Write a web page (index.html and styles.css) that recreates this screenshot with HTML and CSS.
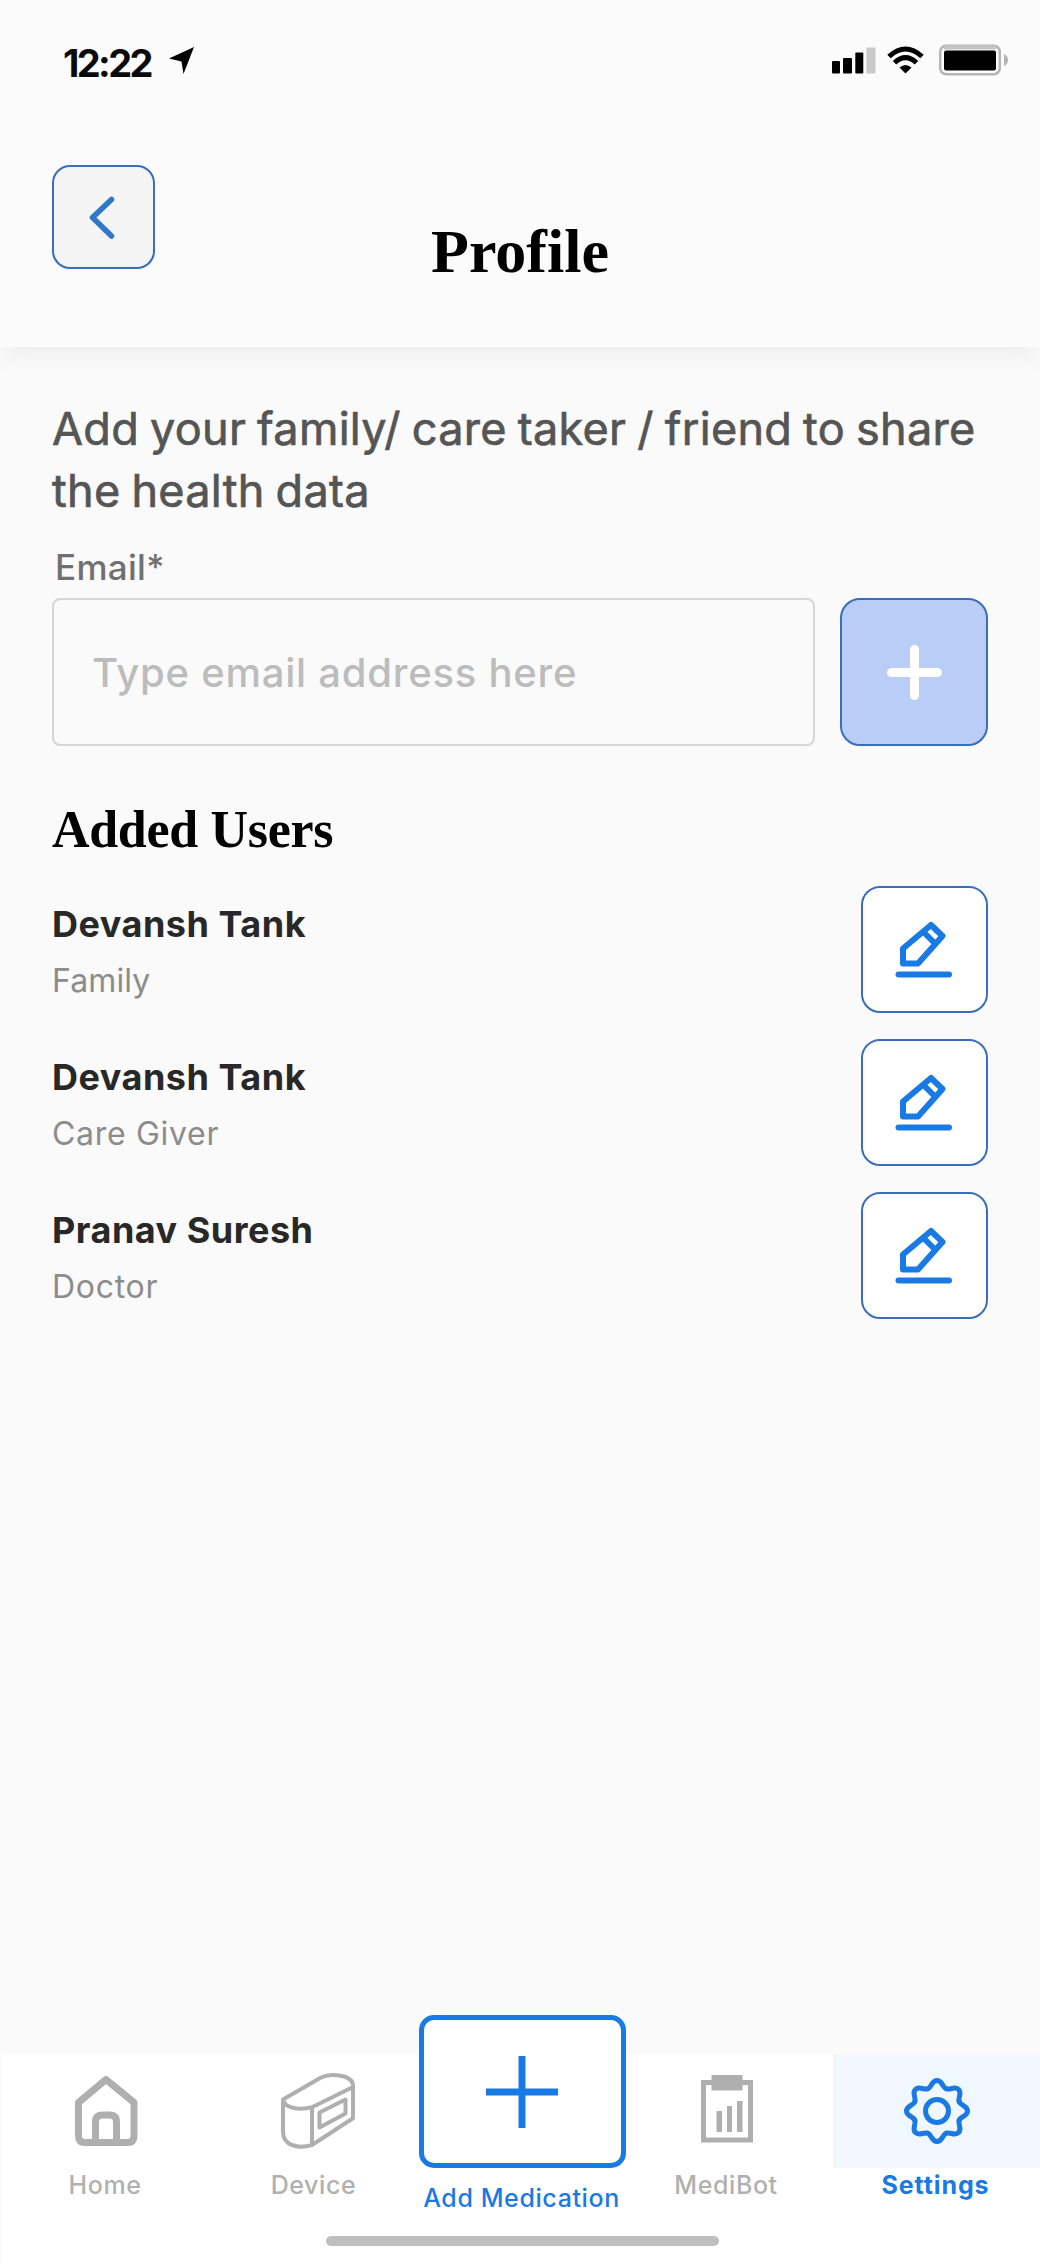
FILE: index.html
```html
<!DOCTYPE html>
<html lang="en">
<head>
<meta charset="utf-8">
<title>Profile</title>
<link rel="stylesheet" href="styles.css">
</head>
<body>
<div class="screen">
  <header class="header">
    <div class="status">
      <div class="status-left">
        <span class="time">12:22</span>
        <svg class="location" width="28" height="28" viewBox="0 0 28 28"><path d="M26 0 1 11.500 13.500 14.500 15.500 27Z"/></svg>
      </div>
      <div class="status-right">
        <svg width="44" height="32" viewBox="0 0 44 32"><rect y="17" width="8" height="12.500" rx="1"/><rect x="11" y="14" width="9" height="15.500" rx="1"/><rect x="23.300" y="8.500" width="8" height="21" rx="1"/><rect x="34.500" y="3.500" width="9" height="26" rx="1" fill="#c9c9c9"/></svg>
        <svg width="37" height="32" viewBox="0 0 37 32"><g fill="none" stroke="#000" stroke-width="5"><path d="M2 12.500Q18.500-2.500 35 12.500"/><path d="M7.500 18.800Q18.500 8.500 29.500 18.800"/></g><path d="M12.500 23.500Q18.500 18.500 24.500 23.500L18.500 29.500Z"/></svg>
        <svg class="battery" width="70" height="32" viewBox="0 0 70 32"><rect x="1.250" y="1.750" width="59.500" height="28.500" rx="6" fill="#fff" stroke="#b5b5b5" stroke-width="2.500"/><path d="M5 3.500H57" stroke="#c4c4c4" stroke-width="4"/><rect x="5" y="6.500" width="52" height="20" rx="2"/><path d="M65 10Q69 12 69 16T65 22Z" fill="#b5b5b5"/></svg>
      </div>
    </div>
    <div class="titlebar">
      <button class="back" aria-label="Back"><svg width="100" height="100" viewBox="0 0 100 100"><path d="M57.500 32.500 38.500 50.500 57.500 69" fill="none" stroke="#2f78c8" stroke-width="5.500" stroke-linecap="round" stroke-linejoin="round"/></svg></button>
      <h1 class="title">Profile</h1>
    </div>
  </header>

  <main class="content">
    <p class="intro">Add your family/ care taker / friend to share<br>the health data</p>
    <label class="label">Email*</label>
    <div class="email-row">
      <div class="input">Type email address here</div>
      <button class="add" aria-label="Add"><svg width="55" height="55" viewBox="0 0 55 55"><path d="M27.500 4.500V50.500M4.500 27.500H50.500" stroke="#fff" stroke-width="9" stroke-linecap="round"/></svg></button>
    </div>
    <h2 class="heading">Added Users</h2>
    <ul class="users">
      <li class="user"><div><div class="name">Devansh Tank</div><div class="role role-short">Family</div></div>
        <button class="edit" aria-label="Edit"><svg viewBox="0 0 127 127"><path class="pencil" d="M42 77.500V62.500L70 39 81.500 50 57 77.500ZM63 46.500 74 57.500"/><path class="line" d="M37.500 88.500H88"/></svg></button></li>
      <li class="user"><div><div class="name">Devansh Tank</div><div class="role">Care Giver</div></div>
        <button class="edit" aria-label="Edit"><svg viewBox="0 0 127 127"><path class="pencil" d="M42 77.500V62.500L70 39 81.500 50 57 77.500ZM63 46.500 74 57.500"/><path class="line" d="M37.500 88.500H88"/></svg></button></li>
      <li class="user"><div><div class="name">Pranav Suresh</div><div class="role">Doctor</div></div>
        <button class="edit" aria-label="Edit"><svg viewBox="0 0 127 127"><path class="pencil" d="M42 77.500V62.500L70 39 81.500 50 57 77.500ZM63 46.500 74 57.500"/><path class="line" d="M37.500 88.500H88"/></svg></button></li>
    </ul>
  </main>

  <nav class="nav">
    <div class="tabs">
      <a class="tab"><span class="tab-icon"><svg width="80" height="80" viewBox="0 0 80 80"><g fill="none" stroke="#afafaf" stroke-width="7" stroke-linejoin="round"><path d="M40 9.500 12.500 32.500V66q0 6.500 6.500 6.500h42.500q6.500 0 6.500-6.500V32.500Z"/><path d="M29.500 72.500V52q0-7 7-7h7q7 0 7 7V72.500"/></g></svg></span><span class="tab-label">Home</span></a>
      <a class="tab"><span class="tab-icon"><svg width="80" height="80" viewBox="-4 0 80 80"><g fill="none" stroke="#afafaf" stroke-width="4" stroke-linejoin="round"><path d="M4 29.500 42 7.500C51 3 75 4 74 17V48.300L33 75C20 79 4 76 4 62ZM4 29.500C5 38 20 40.500 33 37.300L74 17M33 37.300V75M40.500 42.500 66.500 29.500V43.500L40.500 57.500Z"/></g></svg></span><span class="tab-label">Device</span></a>
      <a class="tab tab-add"><span class="add-box"><svg width="74" height="74" viewBox="0 0 74 74"><path d="M36 1V73M0 37H72" stroke="#1a7ae4" stroke-width="7"/></svg></span><span class="tab-label">Add Medication</span></a>
      <a class="tab tab-bot"><span class="tab-icon"><svg width="80" height="80" viewBox="0 0 80 80" fill="#afafaf"><path d="M16.500 12.500H63.500V70H16.500Z" fill="none" stroke="#afafaf" stroke-width="5"/><path d="M24.500 5H55.500V20.500H24.500ZM29.500 41H35V62H29.500ZM40 36H45V62H40ZM50 31H55.500V62H50Z"/></svg></span><span class="tab-label">MediBot</span></a>
      <a class="tab tab-active"><span class="tab-icon"><svg width="80" height="80" viewBox="-40 -41 80 80"><defs><path id="lobe" d="M-9.200-22.200C-5-24-5.500-30.500 0-30.500S5-24 9.200-22.200"/></defs><g fill="none" stroke="#1a7ae4" stroke-width="5" stroke-linecap="round"><circle r="11.500"/><use href="#lobe"/><use href="#lobe" transform="rotate(45)"/><use href="#lobe" transform="rotate(90)"/><use href="#lobe" transform="rotate(135)"/><use href="#lobe" transform="rotate(180)"/><use href="#lobe" transform="rotate(225)"/><use href="#lobe" transform="rotate(270)"/><use href="#lobe" transform="rotate(315)"/></g></svg></span><span class="tab-label">Settings</span></a>
    </div>
    <div class="home-indicator"></div>
  </nav>
</div>
</body>
</html>
```
FILE: styles.css
```css
* { box-sizing: border-box; }
body { margin: 0; background: #fafafa; font-family: Inter, "Liberation Sans", sans-serif; }
button { padding: 0; font: inherit; }
svg { display: block; }
.screen { width: 1040px; height: 2264px; display: flex; flex-direction: column; overflow: hidden; background: #fafafa; }

.header { height: 347px; flex: none; background: #fbfbfb; box-shadow: 0 6px 28px rgba(0, 0, 0, 0.06); }
.status { height: 165px; padding: 42px 31px 0 63px; display: flex; justify-content: space-between; align-items: flex-start; }
.status-left { display: flex; gap: 17px; }
.time { font-size: 38px; font-weight: 650; line-height: 42px; letter-spacing: -2.6px; color: #0a0a0a; }
.location { margin-top: 5px; }
.status-right { display: flex; gap: 11px; padding-top: 2px; }
.battery { margin-left: 4px; }
.titlebar { padding: 0 52px; display: grid; grid-template-columns: 1fr auto 1fr; }
.back { width: 103px; height: 104px; border: 2px solid #3a6dbd; border-radius: 18px; background: #f4f4f4; }
.title { margin: 51px 0 0; font: bold 62px/70px "Liberation Serif", serif; color: #000; }

.content { flex: 1; min-height: 0; padding: 51px 51px 0 52px; white-space: nowrap; }
.intro { margin: 0; font-size: 45px; font-weight: 400; line-height: 62px; letter-spacing: 0.3px; word-spacing: -2px; color: #555; -webkit-text-stroke: 0.7px #555; }
.label { display: block; margin: 23px 0 0 3px; font-size: 35px; font-weight: 450; line-height: 44px; letter-spacing: 0.3px; color: #707070; }
.email-row { margin-top: 9px; display: flex; justify-content: space-between; }
.input { width: 763px; height: 148px; padding-left: 38px; display: flex; align-items: center; border: 2px solid #d6d6d6; border-radius: 8px; font-size: 40px; font-weight: 450; letter-spacing: 0.75px; color: #bcbcbc; }
.add { width: 148px; height: 148px; margin-right: 1px; display: grid; place-items: center; border: 2px solid #3a6dbd; border-radius: 20px; background: #b9cdf6; }
.heading { margin: 54px 0 0; font: bold 52px/60px "Liberation Serif", serif; letter-spacing: -0.3px; color: #000; }
.users { margin: 26px 1px 0 0; padding: 0; list-style: none; display: flex; flex-direction: column; gap: 26px; }
.user { height: 127px; display: flex; justify-content: space-between; }
.name { margin-top: 16px; font-size: 36px; font-weight: 650; line-height: 44px; letter-spacing: 0.5px; color: #282828; }
.role { margin-top: 15px; font-size: 32px; line-height: 40px; letter-spacing: 0.7px; color: #8c8c8c; }
.role-short { letter-spacing: 0.1px; }
.edit { width: 127px; height: 127px; border: 2px solid #3a6dbd; border-radius: 19px; background: #fff; }
.edit svg { width: 127px; height: 127px; margin: -2px; }
.pencil { fill: none; stroke: #1a7ae4; stroke-width: 6; stroke-linejoin: round; }
.line { stroke: #1a7ae4; stroke-width: 6; stroke-linecap: round; }

.nav { height: 210px; flex: none; margin-left: 2px; background: #fff; display: flex; flex-direction: column; align-items: flex-start; }
.tabs { height: 182px; display: grid; grid-template-columns: 208px 209px 207px 207px 207px; }
.tab { display: flex; flex-direction: column; align-items: center; font-size: 25px; font-weight: 500; line-height: 30px; letter-spacing: 0.6px; color: #b0b0b0; white-space: nowrap; }
.tab-icon { width: 100%; height: 114px; margin-bottom: 2px; padding-top: 16px; display: flex; justify-content: center; }
.tab-icon svg { overflow: visible; }
.tab-label { margin-right: 2px; }
.tab-bot { padding-right: 5px; }
.tab-active { color: #1a7ae4; font-weight: 700; letter-spacing: 0.9px; }
.tab-active .tab-icon { background: #f0f7fe; }
.tab-add { margin-top: -39px; color: #1a7ae4; }
.add-box { width: 207px; height: 153px; margin-bottom: 15px; display: grid; place-items: center; border: 5px solid #1a7ae4; border-radius: 15px; background: #fff; }
.home-indicator { width: 393px; height: 10px; margin-left: 324px; border-radius: 5px; background: #bfbfbf; }
```
